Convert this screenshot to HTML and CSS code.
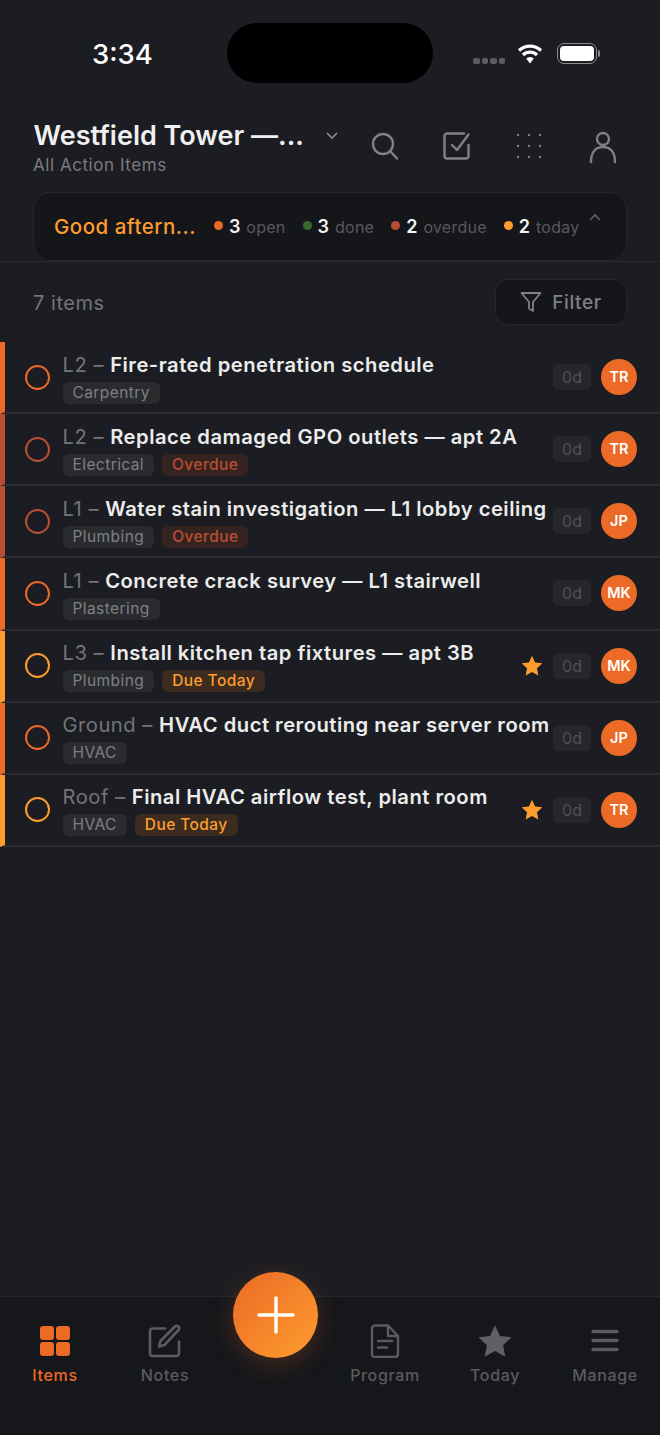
FILE: index.html
```html
<!DOCTYPE html>
<html lang="en">
<head>
<meta charset="utf-8">
<title>All Action Items</title>
<link rel="stylesheet" href="styles.css">
</head>
<body>
<div class="app">
  <div class="status">
    <span class="clock">3:34</span>
    <div class="island"></div>
    <div class="status-right">
      <div class="signal"><i></i><i></i><i></i><i></i></div>
      <svg class="wifi" width="26" height="22" viewBox="0 0 26 22"><path d="M2 7.500a16 16 0 0 1 22 0M6 12a10 10 0 0 1 14 0" fill="none" stroke="#fff" stroke-width="3.200"/><path d="M9.200 15.600a5.400 5.400 0 0 1 7.600 0L13 20.500z" fill="#fff"/></svg>
      <div class="battery"><div class="battery-fill"></div></div>
      <div class="battery-cap"></div>
    </div>
  </div>

  <header class="head">
    <div class="head-titles">
      <div class="project">Westfield Tower —...</div>
      <div class="sub">All Action Items</div>
    </div>
    <svg class="caret" width="14" height="9" viewBox="0 0 14 9"><path d="M2 2l5 5 5-5" fill="none" stroke="#8a8b8e" stroke-width="1.600"/></svg>
    <div class="head-icons">
      <svg width="30" height="30" viewBox="0 0 30 30" fill="none" stroke="#808184" stroke-width="2.400" stroke-linecap="round"><circle cx="13" cy="13" r="10"/><path d="M20.500 20.500L27 27.500"/></svg>
      <svg width="30" height="30" viewBox="-1 0 30 30" fill="none" stroke="#808184" stroke-width="2.400" stroke-linecap="round" stroke-linejoin="round"><path d="M25.500 14v11a2.500 2.500 0 0 1-2.500 2.500H4A2.500 2.500 0 0 1 1.500 25V5A2.500 2.500 0 0 1 4 2.500h17"/><path d="M9 14l5 5L25.500 3.500"/></svg>
      <svg width="30" height="30" viewBox="0 0 30 30" fill="#808184"><circle cx="4" cy="4" r="1.200"/><circle cx="15" cy="4" r="1.200"/><circle cx="26" cy="4" r="1.200"/><circle cx="4" cy="15" r="1.200"/><circle cx="15" cy="15" r="1.200"/><circle cx="26" cy="15" r="1.200"/><circle cx="4" cy="26" r="1.200"/><circle cx="15" cy="26" r="1.200"/><circle cx="26" cy="26" r="1.200"/></svg>
      <svg width="30" height="32" viewBox="-2 0 30 32" fill="none" stroke="#808184" stroke-width="2.400" stroke-linecap="round"><circle cx="15" cy="8" r="6"/><path d="M3 31c0-9 4-15 12-15s12 6 12 15"/></svg>
    </div>
  </header>

  <section class="summary">
    <span class="greet">Good aftern...</span>
    <div class="stats">
      <span class="stat"><i class="dot d-open"></i><b>3</b><em>open</em></span>
      <span class="stat"><i class="dot d-done"></i><b>3</b><em>done</em></span>
      <span class="stat"><i class="dot d-over"></i><b>2</b><em>overdue</em></span>
      <span class="stat"><i class="dot d-today"></i><b>2</b><em>today</em></span>
    </div>
    <svg class="collapse" width="14" height="9" viewBox="0 0 14 9"><path d="M2 7l5-5 5 5" fill="none" stroke="#5f6063" stroke-width="1.600"/></svg>
  </section>

  <div class="toolbar">
    <span class="count">7 items</span>
    <div class="filter">
      <svg width="22" height="22" viewBox="0 0 22 22" fill="none" stroke="#808184" stroke-width="1.800" stroke-linejoin="round"><path d="M1.500 2h19l-7.500 9v9l-4-2.500V11z"/></svg>
      <span>Filter</span>
    </div>
  </div>

  <main class="list">
    <article class="row bar-open">
      <span class="ring"></span>
      <div class="body"><div class="title"><span>L2 – </span><strong>Fire-rated penetration schedule</strong></div><div class="tags"><span class="tag">Carpentry</span></div></div>
      <span class="age">0d</span><span class="avatar">TR</span>
    </article>
    <article class="row bar-over">
      <span class="ring"></span>
      <div class="body"><div class="title"><span>L2 – </span><strong>Replace damaged GPO outlets — apt 2A</strong></div><div class="tags"><span class="tag">Electrical</span><span class="tag tag-over">Overdue</span></div></div>
      <span class="age">0d</span><span class="avatar">TR</span>
    </article>
    <article class="row bar-over">
      <span class="ring"></span>
      <div class="body"><div class="title"><span>L1 – </span><strong>Water stain investigation — L1 lobby ceiling</strong></div><div class="tags"><span class="tag">Plumbing</span><span class="tag tag-over">Overdue</span></div></div>
      <span class="age">0d</span><span class="avatar">JP</span>
    </article>
    <article class="row bar-open">
      <span class="ring"></span>
      <div class="body"><div class="title"><span>L1 – </span><strong>Concrete crack survey — L1 stairwell</strong></div><div class="tags"><span class="tag">Plastering</span></div></div>
      <span class="age">0d</span><span class="avatar">MK</span>
    </article>
    <article class="row bar-today">
      <span class="ring"></span>
      <div class="body"><div class="title"><span>L3 – </span><strong>Install kitchen tap fixtures — apt 3B</strong></div><div class="tags"><span class="tag">Plumbing</span><span class="tag tag-today">Due Today</span></div></div>
      <svg class="star" width="22" height="21" viewBox="0 0 24 23"><path d="M12 .8l3.400 7.300 7.900 1-5.800 5.500 1.500 7.900L12 18.600l-7 3.900 1.500-7.900L.7 9.100l7.900-1z" fill="#ff9c2e"/></svg>
      <span class="age">0d</span><span class="avatar">MK</span>
    </article>
    <article class="row bar-open">
      <span class="ring"></span>
      <div class="body"><div class="title"><span>Ground – </span><strong>HVAC duct rerouting near server room</strong></div><div class="tags"><span class="tag">HVAC</span></div></div>
      <span class="age">0d</span><span class="avatar">JP</span>
    </article>
    <article class="row bar-today">
      <span class="ring"></span>
      <div class="body"><div class="title"><span>Roof – </span><strong>Final HVAC airflow test, plant room</strong></div><div class="tags"><span class="tag">HVAC</span><span class="tag tag-today">Due Today</span></div></div>
      <svg class="star" width="22" height="21" viewBox="0 0 24 23"><path d="M12 .8l3.400 7.300 7.900 1-5.800 5.500 1.500 7.900L12 18.600l-7 3.900 1.500-7.900L.7 9.100l7.900-1z" fill="#ff9c2e"/></svg>
      <span class="age">0d</span><span class="avatar">TR</span>
    </article>
  </main>

  <nav class="tabs">
    <div class="tab tab-on">
      <svg width="34" height="34" viewBox="0 0 34 34" fill="#ea6a26"><rect x="2" y="2" width="14" height="14" rx="3"/><rect x="18" y="2" width="14" height="14" rx="3"/><rect x="2" y="18" width="14" height="14" rx="3"/><rect x="18" y="18" width="14" height="14" rx="3"/></svg>
      <span>Items</span>
    </div>
    <div class="tab">
      <svg width="34" height="34" viewBox="0 0 34 34" fill="none" stroke="#5a5b5e" stroke-linecap="round" stroke-linejoin="round"><path d="M17 4.500H4.500A2.500 2.500 0 0 0 2 7v22.500A2.500 2.500 0 0 0 4.500 32h24a2.500 2.500 0 0 0 2.500-2.500V17.500" stroke-width="2.600"/><path d="M11 22.500l1.500-5.500L27 2.500c1-1 2.500-1 3.500 0s1 2.500 0 3.500L16.500 21z" stroke-width="2.600"/></svg>
      <span>Notes</span>
    </div>
    <div class="tab-gap"></div>
    <div class="tab">
      <svg width="34" height="34" viewBox="0 0 34 34" fill="none" stroke="#5a5b5e" stroke-width="2.400" stroke-linecap="round" stroke-linejoin="round"><path d="M20 1.500H7A3 3 0 0 0 4 4.500v26A3 3 0 0 0 7 33h20a3 3 0 0 0 3-3V12z"/><path d="M20 1.500V12H30M10 17h14M10 23.500h9"/></svg>
      <span>Program</span>
    </div>
    <div class="tab">
      <svg width="34" height="34" viewBox="0 0 24 23"><path d="M12 .3l3.500 7.600 8.200 1-6 5.600 1.600 8.100L12 18.600l-7.300 4 1.600-8.100-6-5.600 8.200-1z" fill="#5f6063"/></svg>
      <span>Today</span>
    </div>
    <div class="tab">
      <svg width="34" height="34" viewBox="0 0 34 34" fill="none" stroke="#5a5b5e" stroke-width="3.400" stroke-linecap="round"><path d="M5 7.500h24M5 16.500h24M5 25.500h24"/></svg>
      <span>Manage</span>
    </div>
  </nav>

  <div class="fab">
    <svg width="38" height="38" viewBox="0 0 38 38" stroke="#fff" stroke-width="3.400" stroke-linecap="round"><path d="M19 2v34M2 19h34"/></svg>
  </div>
</div>
</body>
</html>
```

FILE: styles.css
```css
* { box-sizing: border-box; }
html, body { margin: 0; padding: 0; background: #1c1d22; }
.app {
  position: relative;
  width: 660px;
  height: 1435px;
  display: flex;
  flex-direction: column;
  overflow: hidden;
  background: #1c1d22;
  font-family: Inter, "Liberation Sans", sans-serif;
  color: #f0f0f0;
}

/* status bar */
.status { height: 113px; flex: none; display: flex; padding-top: 23px; }
.clock { width: 227px; padding: 14px 0 0 92px; font-size: 27.500px; font-weight: 500; line-height: 34px; color: #fff; }
.island { width: 206px; height: 60px; border-radius: 30px; background: #000; }
.status-right { display: flex; align-items: flex-start; padding: 20px 0 0 40px; }
.signal { display: flex; gap: 2px; margin-top: 15px; }
.signal i { width: 6.500px; height: 6px; border-radius: 2px; background: #5b5c60; }
.wifi { margin-left: 12px; }
.battery { margin-left: 14px; width: 40px; height: 21px; padding: 2px; border: 1.500px solid #8b8c8f; border-radius: 7px; }
.battery-fill { height: 100%; border-radius: 4px; background: #fff; }
.battery-cap { width: 2px; height: 7px; margin-top: 7px; margin-left: 1px; border-radius: 0 2px 2px 0; background: #8b8c8f; }

/* header */
.head { height: 79px; flex: none; display: flex; align-items: flex-start; padding-left: 33px; }
.head-titles { width: 273px; }
.project { font-size: 27px; font-weight: 600; line-height: 46px; color: #f0f0f0; white-space: nowrap; margin-left: 0.500px; }
.sub { font-size: 17px; line-height: 22px; margin-top: -5px; color: #7a7b7e; letter-spacing: 0.55px; }
.caret { margin: 18px 0 0 19px; }
.head-icons { display: flex; gap: 42px; margin: 18px 0 0 0; padding-left: 31px; }
.head-icons svg { overflow: visible; }

/* summary */
.summary {
  flex: none;
  margin: 0 33px;
  height: 69px;
  display: flex;
  align-items: flex-start;
  padding: 0 0 0 20px;
  background: #15161a;
  border: 1px solid #26272c;
  border-radius: 17px;
}
.greet { font-size: 20.500px; line-height: 67px; font-weight: 500; color: #ff9c2e; white-space: nowrap; letter-spacing: 0.5px; }
.stats { display: flex; gap: 17px; margin-left: 18px; line-height: 66px; }
.stat { display: flex; align-items: center; height: 67px; white-space: nowrap; }
.stat b { font-size: 18px; font-weight: 600; color: #f5f5f5; margin-right: 6px; }
.stat em { font-style: normal; font-size: 16px; color: #58595c; letter-spacing: 0.25px; }
.dot { width: 9px; height: 9px; border-radius: 50%; margin-right: 6px; margin-top: -2px; }
.d-open { background: #ea6a26; }
.d-done { background: #38672f; }
.d-over { background: #b84f35; }
.d-today { background: #ff9c2e; }
.collapse { margin: 20px 0 0 9px; }

/* toolbar */
.toolbar {
  flex: none;
  height: 81px;
  padding: 17px 33px 0;
  display: flex;
  align-items: flex-start;
  justify-content: space-between;
  border-top: 1px solid #2a2b30;
}
.count { font-size: 20px; line-height: 48px; color: #737477; letter-spacing: 0.55px; }
.filter {
  width: 132px;
  height: 46px;
  display: flex;
  align-items: center;
  justify-content: center;
  gap: 10px;
  background: #15161a;
  border: 1px solid #26272c;
  border-radius: 13px;
  font-size: 19px;
  font-weight: 500;
  color: #7f8083;
  letter-spacing: 0.6px;
}

/* list */
.list { flex: 1; min-height: 0; }
.row {
  height: 72.150px;
  display: flex;
  align-items: center;
  border-left: 5px solid;
  border-bottom: 2px solid #2a2b30;
  padding-left: 19.500px;
}
.bar-open { border-left-color: #ea6a26; }
.bar-over { border-left-color: #b84f35; }
.bar-today { border-left-color: #ff9c2e; }
.ring { flex: none; width: 25px; height: 25px; border-radius: 50%; border: 2.500px solid; }
.bar-open .ring { border-color: #ea6a26; }
.bar-over .ring { border-color: #b84f35; }
.bar-today .ring { border-color: #ff9c2e; }
.body { flex: 1; min-width: 0; margin-left: 13px; padding-top: 2px; }
.title { font-size: 20.200px; line-height: 30px; white-space: nowrap; margin-top: -3px; letter-spacing: 0.5px; }
.title span { color: #737477; font-weight: 400; }
.title strong { color: #ececec; font-weight: 600; }
.tags { display: flex; gap: 8px; margin-top: 2px; }
.tag {
  height: 22px;
  padding: 0 10px;
  border-radius: 6px;
  background: #2a2b2f;
  color: #7f8083;
  font-size: 15.500px;
  font-weight: 400;
  line-height: 22px;
  letter-spacing: 0.42px;
}
.tag-over { background: #35231f; color: #b84f35; font-weight: 500; }
.tag-today { background: #3b2c1f; color: #ff9c2e; font-weight: 500; }
.star { flex: none; margin-right: 10.500px; }
.age {
  flex: none;
  width: 38px;
  height: 26px;
  border-radius: 6px;
  background: #26272b;
  color: #4f5053;
  font-size: 16px;
  line-height: 26px;
  text-align: center;
}
.avatar {
  flex: none;
  width: 36px;
  height: 36px;
  margin: 0 23px 0 10px;
  border-radius: 50%;
  background: #ea6a26;
  color: #fff;
  font-size: 14.500px;
  font-weight: 600;
  line-height: 36px;
  text-align: center;
}

/* tabs */
.tabs {
  flex: none;
  height: 139px;
  display: flex;
  padding-top: 27px;
  background: #16171b;
  border-top: 1px solid #26272b;
}
.tab { width: 110px; display: flex; flex-direction: column; align-items: center; gap: 7px; font-size: 16px; font-weight: 500; color: #5a5b5e; letter-spacing: 0.65px; line-height: 20px; }
.tab svg { flex: none; }
.tab-on { color: #ea6a26; }
.tab-gap { width: 110px; }
.fab {
  position: absolute;
  left: 233px;
  top: 1272px;
  width: 85px;
  height: 86px;
  display: flex;
  align-items: center;
  justify-content: center;
  border-radius: 50%;
  background: linear-gradient(135deg, #ea6a26, #ff9c2e);
  box-shadow: 0 6px 24px rgba(234, 106, 38, 0.24);
}
```
